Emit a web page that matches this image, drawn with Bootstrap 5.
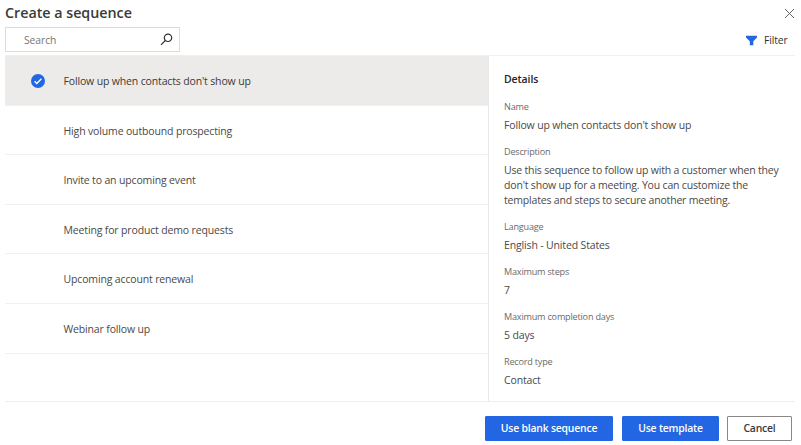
<!DOCTYPE html>
<html lang="en">
<head>
<meta charset="utf-8">
<meta name="viewport" content="width=device-width, initial-scale=1">
<title>Create a sequence</title>
<link href="https://cdn.jsdelivr.net/npm/bootstrap@5.3.0/dist/css/bootstrap.min.css" rel="stylesheet">
<style>
  body { font-family: "Segoe UI", "Open Sans", "Noto Sans", sans-serif; font-size: 10.5px; line-height: 15px; letter-spacing: -.15px; color: #4a4948; background: #fff; }
  .dialog { height: 445px; padding: 0 6px 0 5px; }
  .dialog-top { height: 27px; }
  .dialog-title { font-size: 14.3px; line-height: 20px; font-weight: 600; letter-spacing: -.02px; color: #3b3a39; padding-top: 3px; }
  .close-icon { margin-top: 0; }
  .tools { height: 28px; }
  .search-box { width: 175px; height: 25px; border: 1px solid #dcdcdc; padding: 0 6px 0 18px; }
  .search-box input { font-size: 10.4px; letter-spacing: -.1px; color: #4a4948; outline: 0; width: 110px; padding-top: 1px !important; }
  .search-box input::placeholder { color: #777; opacity: 1; }
  .filter-btn { color: #323130; gap: 7px; padding-right: 7.5px; height: 26px; font-size: 10.3px; letter-spacing: -.1px; }
  .filter-btn span { padding-top: 1px; }
  .content { height: 347px; border-top: 1px solid #efefef; border-bottom: 1px solid #efefef; }
  .templates { width: 484px; border-right: 1px solid #e9e9e9; }
  .template-row { height: 49.6px; padding: 2.4px 0 0 26px; border-bottom: 1px solid #f1f1f1; }
  .template-row.selected { background: #edebe9; color: #3b3a39; }
  .tick { width: 14px; margin-right: 18.5px; }
  .details { padding: 16px 0 0 15px; }
  .details h2 { font-size: 10.5px; line-height: 15px; font-weight: 600; letter-spacing: -.1px; color: #252423; margin-bottom: 11.5px; }
  .details dt { font-size: 9.1px; line-height: 15px; font-weight: 400; letter-spacing: -.2px; color: #6b6a69; margin-bottom: 4.1px; }
  .details dd { margin-bottom: 11px; line-height: 15px; }
  .description { letter-spacing: -.18px; }
  .actions { padding: 14px 3px 0 0; }
  .actions .btn { height: 25px; font-size: 10.4px; line-height: 15px; letter-spacing: -.2px; font-weight: 600; padding: 0; border-radius: 1px; }
  .act-main { --bs-btn-bg: #2266e3; --bs-btn-border-color: #2266e3; }
  .w-blank { width: 128px; margin-right: 9px; }
  .w-template { width: 97px; margin-right: 8px; }
  .actions .w-cancel { width: 65px; border: 1px solid #8a8886; color: #3b3a39; background: #fff; }
</style>
</head>
<body>
<main class="dialog d-flex flex-column">
  <header class="dialog-top d-flex justify-content-between">
    <h1 class="dialog-title mb-0"><span>Create a sequence</span></h1>
    <button class="btn p-0 border-0 d-flex align-items-center close-icon" aria-label="Close">
      <svg width="11" height="11" viewBox="0 0 11 11" fill="none" stroke="#555" stroke-width=".9"><path d="M1 1l9 9M10 1l-9 9"/></svg>
    </button>
  </header>
  <div class="tools d-flex justify-content-between align-items-start">
    <div class="search-box d-flex align-items-center justify-content-between">
      <input type="text" class="border-0 p-0 bg-transparent" placeholder="Search" aria-label="Search">
      <svg width="13" height="13" viewBox="0 0 13 13" fill="none" stroke="#333" stroke-width="1.2"><circle cx="8" cy="4.8" r="3.7"/><path d="M5.3 7.5L1 11.8"/></svg>
    </div>
    <button class="btn border-0 py-0 ps-0 d-flex align-items-center filter-btn">
      <svg width="11" height="11" viewBox="0 0 11 11" fill="#2266e3"><path d="M0 .8h11v1.6L7.3 6.2v4H3.8v-4L0 2.4z"/></svg><span>Filter</span>
    </button>
  </div>
  <section class="content d-flex flex-shrink-0">
    <div class="templates flex-shrink-0">
      <div class="template-row selected d-flex align-items-center">
        <span class="tick d-flex"><svg width="14" height="14" viewBox="0 0 14 14" fill="none"><circle cx="7" cy="7" r="7" fill="#2266e3"/><path d="M3.6 7.2l2.2 2.2 4.6-4.6" stroke="#fff" stroke-width="1.4"/></svg></span><span>Follow up when contacts don't show up</span>
      </div>
      <div class="template-row d-flex align-items-center"><span class="tick"></span><span>High volume outbound prospecting</span></div>
      <div class="template-row d-flex align-items-center"><span class="tick"></span><span>Invite to an upcoming event</span></div>
      <div class="template-row d-flex align-items-center"><span class="tick"></span><span>Meeting for product demo requests</span></div>
      <div class="template-row d-flex align-items-center"><span class="tick"></span><span>Upcoming account renewal</span></div>
      <div class="template-row d-flex align-items-center"><span class="tick"></span><span>Webinar follow up</span></div>
    </div>
    <aside class="details flex-grow-1">
      <h2>Details</h2>
      <dl class="mb-0">
        <dt>Name</dt><dd>Follow up when contacts don't show up</dd>
        <dt>Description</dt><dd class="description">Use this sequence to follow up with a customer when they<br>don't show up for a meeting. You can customize the<br>templates and steps to secure another meeting.</dd>
        <dt>Language</dt><dd>English - United States</dd>
        <dt>Maximum steps</dt><dd>7</dd>
        <dt>Maximum completion days</dt><dd>5 days</dd>
        <dt>Record type</dt><dd>Contact</dd>
      </dl>
    </aside>
  </section>
  <footer class="actions d-flex justify-content-end">
    <button class="btn btn-primary act-main w-blank">Use blank sequence</button>
    <button class="btn btn-primary act-main w-template">Use template</button>
    <button class="btn w-cancel">Cancel</button>
  </footer>
</main>
<script src="https://cdn.jsdelivr.net/npm/bootstrap@5.3.0/dist/js/bootstrap.bundle.min.js"></script>
</body>
</html>
